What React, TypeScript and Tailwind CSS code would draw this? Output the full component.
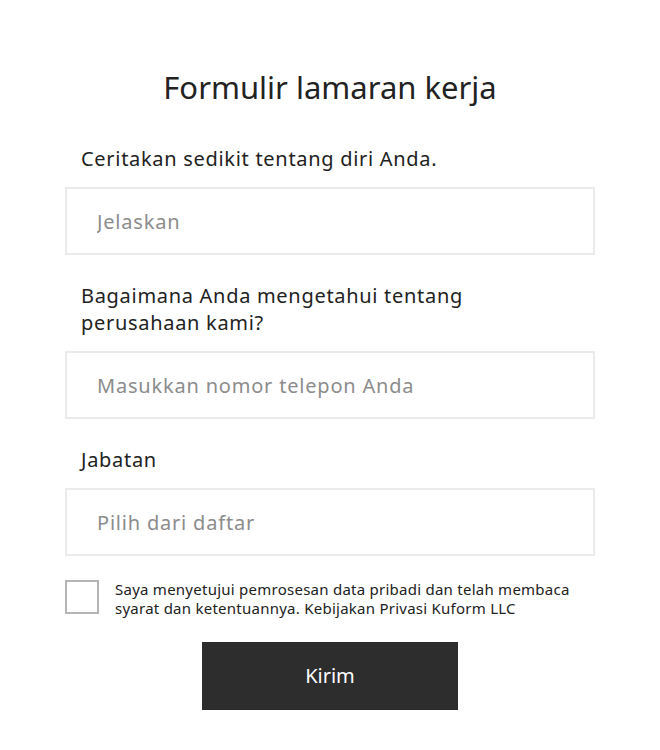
import React from 'react';

const font = { fontFamily: '"Noto Sans", "Open Sans", sans-serif' };

interface FieldProps {
  label: React.ReactNode;
  placeholder: string;
}

const Field: React.FC<FieldProps> = ({ label, placeholder }) => (
  <div className="flex flex-col">
    <label className="mb-[15px] px-4 text-[20px] leading-[27px] tracking-[0.7px] text-[#222222]">{label}</label>
    <input
      type="text"
      placeholder={placeholder}
      className="h-[68px] w-full border-2 border-[#ebebeb] bg-white px-[30px] text-[20px] tracking-[0.8px] text-[#222222] outline-none placeholder:text-[#8c8c8c]"
      style={font}
    />
  </div>
);

export default function App() {
  return (
    <div className="min-h-[750px] w-full bg-white" style={font}>
      <div className="mx-auto flex w-[530px] flex-col pt-[67px]">
        <h1 className="mb-[38px] text-center text-[31px] leading-[40px] font-normal text-[#222222]">
          Formulir lamaran kerja
        </h1>

        <div className="flex flex-col gap-[27px]">
          <Field label="Ceritakan sedikit tentang diri Anda." placeholder="Jelaskan" />
          <Field
            label={
              <>
                Bagaimana Anda mengetahui tentang
                <br />
                perusahaan kami?
              </>
            }
            placeholder="Masukkan nomor telepon Anda"
          />
          <Field label="Jabatan" placeholder="Pilih dari daftar" />
        </div>

        <label className="mt-[24px] flex items-start gap-[16px]">
          <input
            type="checkbox"
            className="h-[34px] w-[34px] shrink-0 appearance-none border-2 border-[#b4b4b4] bg-white"
          />
          <span className="text-[15px] leading-[19px] tracking-[0.25px] text-[#222222]">
            Saya menyetujui pemrosesan data pribadi dan telah membaca syarat dan ketentuannya.
            Kebijakan Privasi Kuform LLC
          </span>
        </label>

        <div className="mt-[24px] flex justify-center">
          <button
            type="button"
            className="h-[68px] w-[256px] bg-[#2d2d2d] text-[20px] text-white"
            style={font}
          >
            Kirim
          </button>
        </div>
      </div>
    </div>
  );
}
